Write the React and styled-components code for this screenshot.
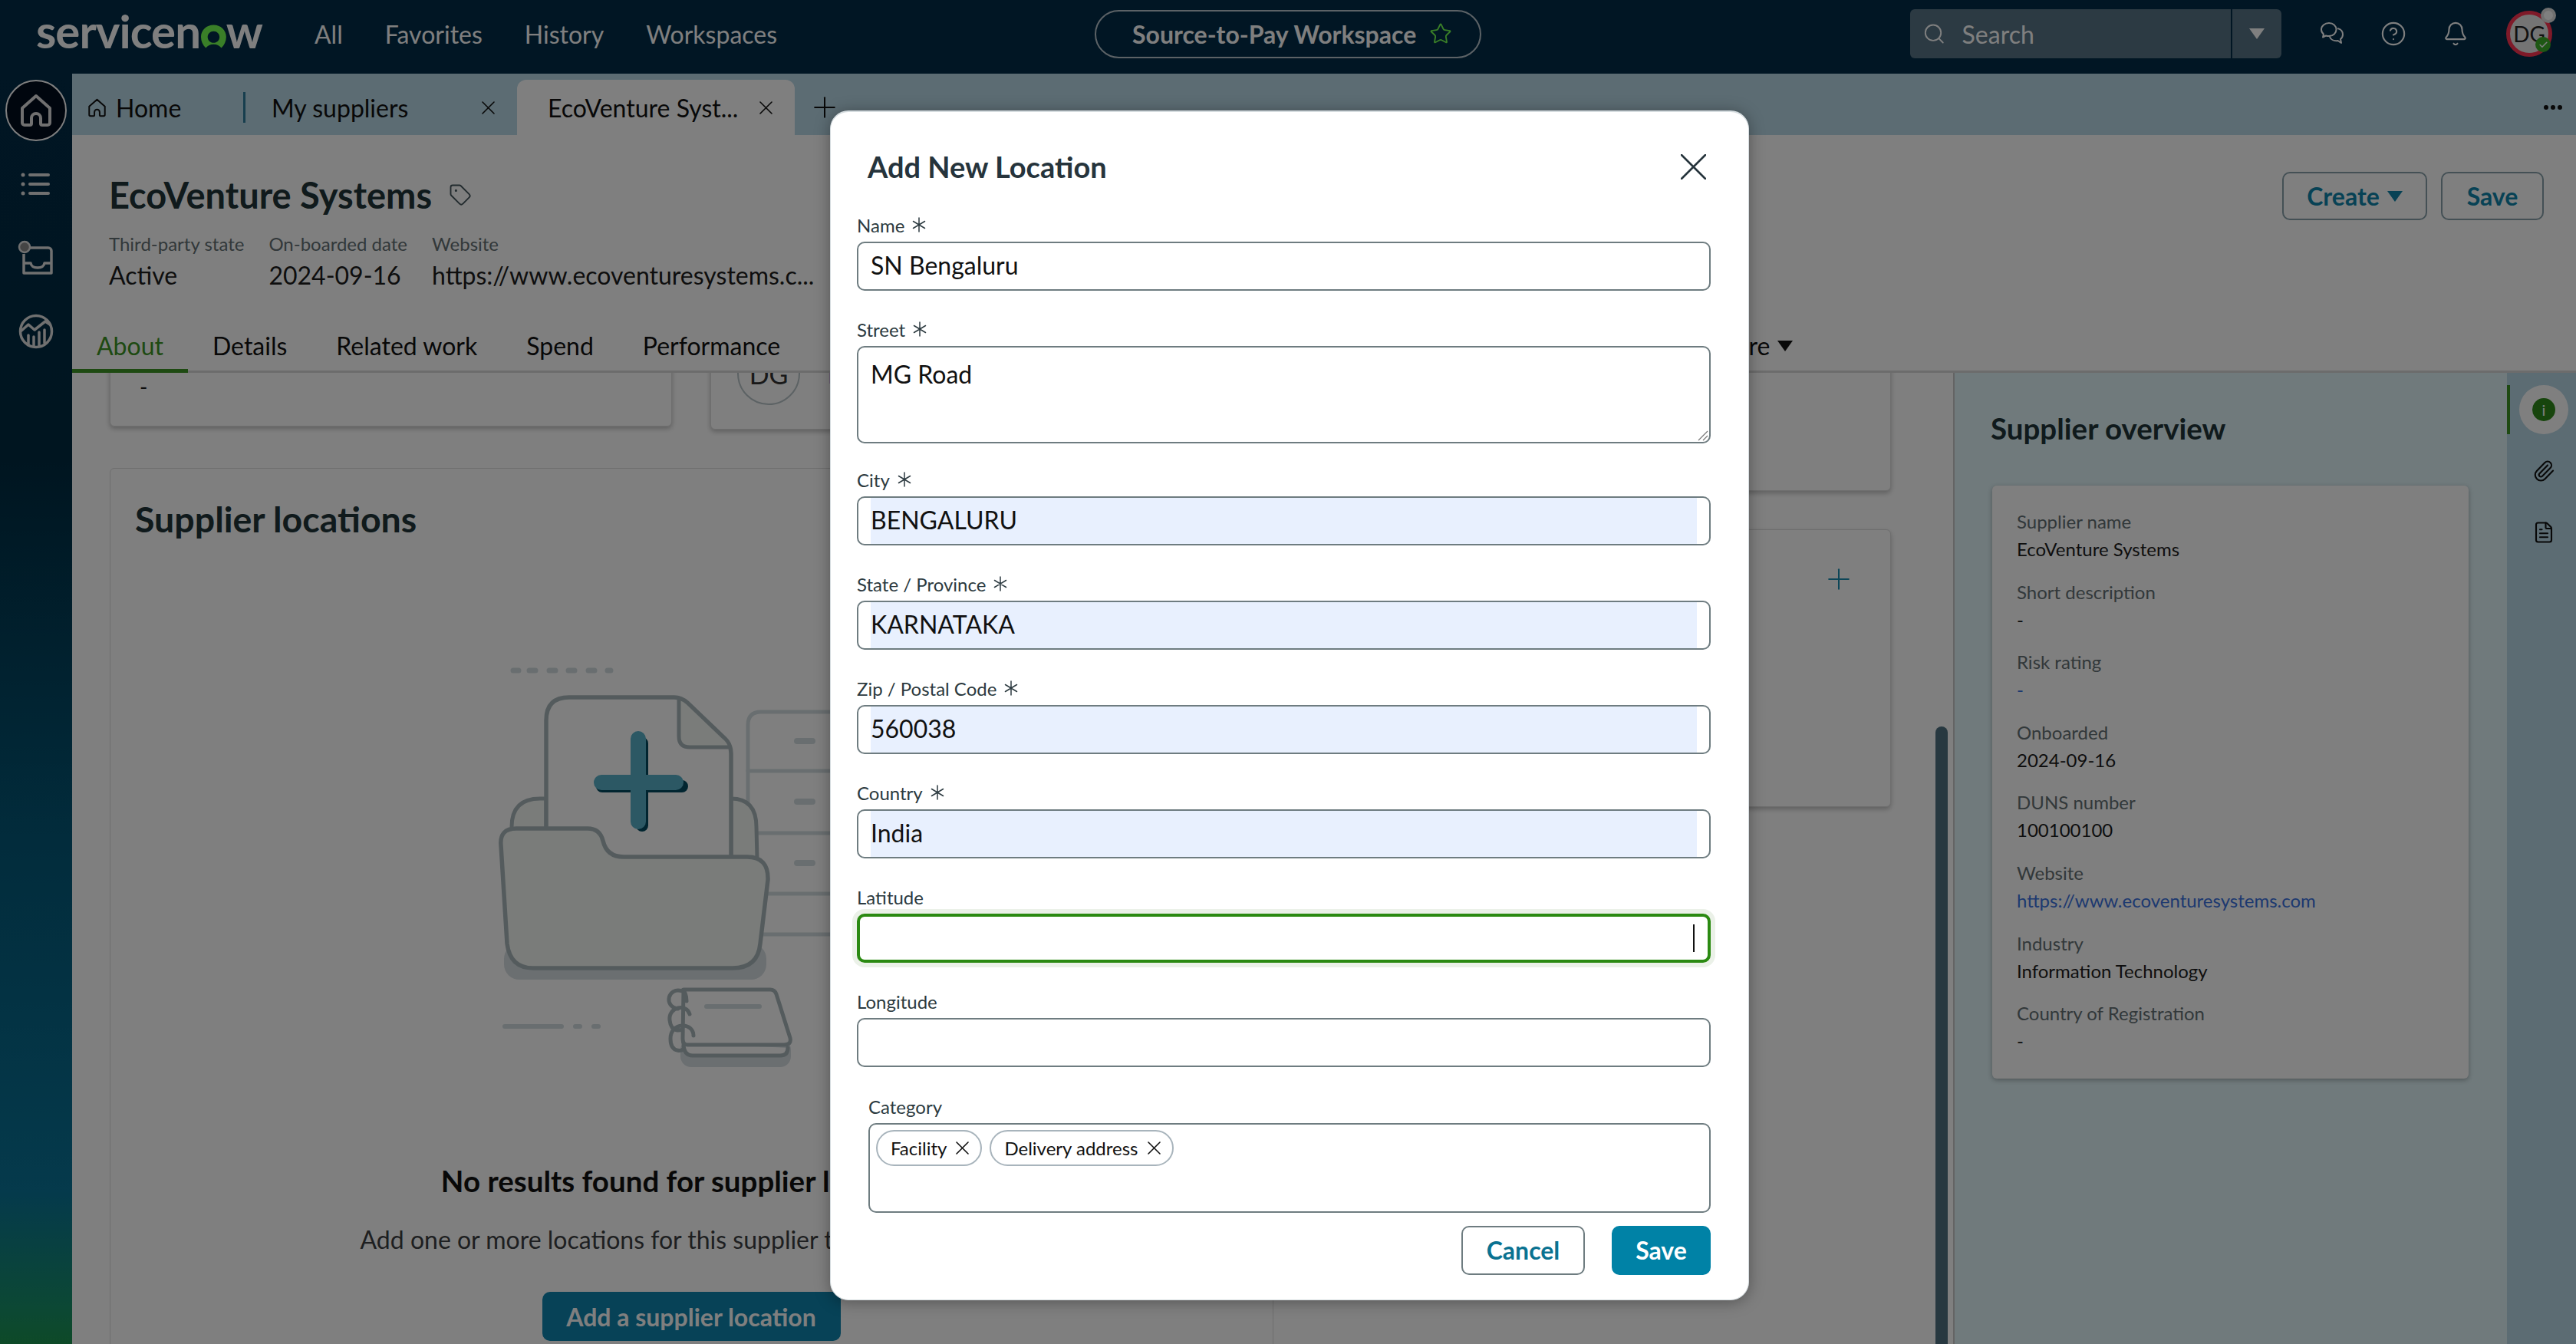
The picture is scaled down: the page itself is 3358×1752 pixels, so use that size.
import React from 'react'
import styled, { createGlobalStyle } from 'styled-components'
import { Search, CircleHelp, Bell, Star, Plus, Tag, Paperclip, FileText, Check } from 'lucide-react'

const GlobalStyle = createGlobalStyle`
  html, body { margin: 0; padding: 0; height: 100%; overflow: hidden; }
  body { font-family: Lato, "Open Sans", sans-serif; background: #fff; color: #1c1c1c; }
  #root { height: 100%; }
  * { box-sizing: border-box; }
`

const Page = styled.div`
  width: 3358px;
  height: 1752px;
  position: relative;
  overflow: hidden;
  display: flex;
  flex-direction: column;
`
const TopBar = styled.header`
  height: 96px;
  flex: none;
  background: #022c48;
  display: flex;
  align-items: center;
  padding: 0 0 8px 47px;
  color: #fff;
`
const Logo = styled.div`
  width: 295px;
  flex: none;
  display: flex;
  align-items: baseline;
  font-size: 60px;
  font-weight: 700;
  letter-spacing: -1px;
  line-height: 60px;
  margin-top: -8px;
  svg { margin: 0 0 -1px 1px; }
`
const Nav = styled.nav`
  display: flex;
  gap: 55px;
  margin-left: 68px;
  font-size: 32px;
`
const Pill = styled.div`
  margin-left: 414px;
  width: 504px;
  height: 63px;
  flex: none;
  border: 2px solid #b8c4cc;
  border-radius: 32px;
  display: flex;
  align-items: center;
  padding-left: 47px;
  gap: 17px;
  font-size: 32px;
  font-weight: 700;
`
const SearchBox = styled.div`
  margin-left: 559px;
  width: 484px;
  height: 64px;
  flex: none;
  background: #587486;
  border-radius: 6px;
  display: flex;
  align-items: center;
  font-size: 32px;
  padding-left: 16px;
  gap: 21px;
`
const SearchLabel = styled.div`
  width: 345px;
`
const SearchCaret = styled.div`
  width: 69px;
  height: 64px;
  border-left: 2px solid #022c48;
  display: flex;
  align-items: center;
  justify-content: center;
`
const TopIcons = styled.div`
  display: flex;
  align-items: center;
  margin-left: 50px;
  gap: 47px;
`
const Avatar = styled.div`
  position: relative;
  width: 60px;
  height: 60px;
  border-radius: 50%;
  border: 5px solid #ff3552;
  background: #e8e8e8;
  color: #222;
  font-size: 28px;
  display: flex;
  align-items: center;
  justify-content: center;
  margin-left: 2px;
`
const AvatarDot = styled.span`
  position: absolute;
  border-radius: 50%;
  display: flex;
  align-items: center;
  justify-content: center;
  right: ${p => p.$right}px;
  top: ${p => p.$top}px;
  width: ${p => p.$size}px;
  height: ${p => p.$size}px;
  background: ${p => p.$bg};
  border: ${p => p.$border};
`
const Shell = styled.div`
  flex: 1;
  display: flex;
  min-height: 0;
`
const LeftRail = styled.aside`
  width: 94px;
  flex: none;
  background: linear-gradient(180deg, #022c48 0%, #002a40 30%, #045878 60%, #0a7498 88%, #18906a 97%, #1c9450 100%);
  display: flex;
  flex-direction: column;
  color: #e0e0e0;
`
const RailItem = styled.div`
  height: 96px;
  display: flex;
  align-items: center;
  justify-content: center;
`
const HomeCircle = styled.div`
  width: 80px;
  height: 80px;
  border-radius: 50%;
  background: #000c1c;
  border: 2px solid #fff;
  display: flex;
  align-items: center;
  justify-content: center;
`
const Work = styled.div`
  flex: 1;
  min-width: 0;
  display: flex;
  flex-direction: column;
`
const TabsBar = styled.div`
  height: 80px;
  flex: none;
  background: #b8d8e6;
  display: flex;
  align-items: flex-end;
  font-size: 32px;
  color: #111;
`
const WorkTab = styled.div`
  height: ${p => (p.$active ? 72 : 80)}px;
  width: ${p => p.$w}px;
  flex: none;
  padding-left: ${p => p.$pad}px;
  display: flex;
  align-items: center;
  justify-content: space-between;
  padding-right: 29px;
  background: ${p => (p.$active ? '#fff' : 'transparent')};
  border-radius: 12px 12px 0 0;
  padding-top: ${p => (p.$active ? 0 : 8)}px;
  margin-top: auto;
`
const TabLabel = styled.span`
  display: flex;
  align-items: center;
  gap: 12px;
`
const TabDivider = styled.div`
  width: 3px;
  height: 40px;
  background: #2f7c9c;
  margin-bottom: 16px;
`
const TabPlus = styled.div`
  height: 80px;
  margin-left: 17px;
  padding-top: 8px;
  display: flex;
  align-items: center;
`
const TabMore = styled.div`
  margin-left: auto;
  height: 80px;
  padding: 8px 18px 0 0;
  display: flex;
  align-items: center;
  gap: 3px;
`
const Dot = styled.span`
  width: 6px;
  height: 6px;
  border-radius: 50%;
  background: #111;
`
const RecordHeader = styled.div`
  height: 310px;
  flex: none;
  background: #fff;
  position: relative;
  display: flex;
  flex-direction: column;
`
const HeaderTop = styled.div`
  flex: 1;
  display: flex;
  justify-content: space-between;
  padding: 50px 42px 0 48px;
`
const RecordTitle = styled.h1`
  margin: 0;
  font-size: 47px;
  line-height: 56px;
  font-weight: 700;
  color: #203438;
  display: flex;
  align-items: center;
  gap: 22px;
  svg { color: #45565c; }
`
const Meta = styled.div`
  display: flex;
  gap: 32px;
  margin-top: 21px;
`
const MetaItem = styled.div`
  display: flex;
  flex-direction: column;
  gap: 6px;
`
const MetaLabel = styled.div`
  font-size: 24px;
  line-height: 30px;
  color: #647074;
`
const MetaValue = styled.div`
  font-size: 32px;
  line-height: 40px;
  color: #1c1c1c;
  white-space: nowrap;
`
const HeaderActions = styled.div`
  display: flex;
  gap: 18px;
  margin-top: -2px;
`
const OutlineBtn = styled.div`
  height: 63px;
  width: ${p => p.$w}px;
  border: 2px solid #88a0aa;
  border-radius: 10px;
  display: flex;
  align-items: center;
  justify-content: center;
  gap: 10px;
  color: #0f84aa;
  font-size: 32px;
  font-weight: 700;
`
const SubTabs = styled.div`
  height: 68px;
  display: flex;
  border-bottom: 3px solid #d8d8d8;
  font-size: 32px;
`
const SubTab = styled.div`
  padding: 2px 32px 0;
  height: 68px;
  display: flex;
  align-items: center;
  gap: 10px;
  margin-left: ${p => p.$ml || 0}px;
  color: ${p => (p.$active ? '#3c9424' : '#111')};
  border-bottom: 5px solid ${p => (p.$active ? '#3c9424' : 'transparent')};
`
const Body = styled.div`
  flex: 1;
  min-height: 0;
  display: flex;
  background: #fff;
`
const Scroller = styled.div`
  width: 2452px;
  flex: none;
  position: relative;
  overflow: hidden;
  padding-left: 49px;
`
const ScrollGrid = styled.div`
  display: grid;
  grid-template-columns: 1517px 757px;
  column-gap: 48px;
  margin-top: -100px;
`
const Column = styled.div`
  display: flex;
  flex-direction: column;
  gap: ${p => p.$gap}px;
`
const CardRow = styled.div`
  display: flex;
  gap: 50px;
  align-items: flex-start;
`
const Card = styled.div`
  width: ${p => (p.$w ? `${p.$w}px` : 'auto')};
  height: ${p => p.$h}px;
  background: #fff;
  border: 1px solid #dcdcdc;
  border-radius: 6px;
  box-shadow: 0 3px 6px rgba(0, 0, 0, 0.25);
  padding: ${p => p.$pad || '0'};
  position: relative;
`
const Dash = styled.div`
  font-size: 28px;
  line-height: 30px;
`
const SmallAvatarRow = styled.div`
  display: flex;
  gap: 36px;
`
const SmallAvatar = styled.div`
  width: 82px;
  height: 82px;
  border-radius: 50%;
  border: 2px solid #b8c4c8;
  display: flex;
  align-items: center;
  justify-content: center;
  font-size: 34px;
  color: #333;
`
const LinkBit = styled.div`
  color: #3a7ce8;
  font-size: 28px;
  line-height: 34px;
  margin-top: 26px;
`
const CardPlus = styled.div`
  display: flex;
  justify-content: flex-end;
  color: #1a8cb0;
`
const LocationsCard = styled.section`
  background: #fff;
  border: 1px solid #dcdcdc;
  border-radius: 6px;
  padding: 37px 33px 0 32px;
  height: 1300px;
`
const CardTitle = styled.h2`
  margin: 0;
  font-size: 46.500px;
  line-height: 56px;
  font-weight: 700;
  color: #203438;
`
const Empty = styled.div`
  display: flex;
  flex-direction: column;
  align-items: center;
  margin-top: 146px;
`
const EmptyTitle = styled.h3`
  margin: 106px 0 0;
  font-size: 38.500px;
  line-height: 46px;
  font-weight: 700;
  color: #111;
  white-space: nowrap;
`
const EmptyText = styled.p`
  margin: 34px 0 0;
  font-size: 32px;
  line-height: 40px;
  color: #3c3f42;
  white-space: nowrap;
`
const PrimaryBtn = styled.div`
  margin-top: 48px;
  height: 64px;
  width: 389px;
  border-radius: 10px;
  background: #0e84ae;
  color: #fff;
  font-size: 32px;
  font-weight: 700;
  display: flex;
  align-items: center;
  justify-content: center;
`
const ScrollThumb = styled.div`
  position: absolute;
  left: 2429px;
  top: 461px;
  bottom: -10px;
  width: 16px;
  border-radius: 8px;
  background: #4e7080;
`
const SidePanel = styled.aside`
  width: 722px;
  flex: none;
  background: #e0f4f8;
  border-left: 2px solid #c8c8c8;
  padding: 47px 0 0 47px;
`
const PanelTitle = styled.h2`
  margin: 0;
  font-size: 38.500px;
  line-height: 50px;
  font-weight: 700;
  color: #203438;
`
const OverviewCard = styled.div`
  margin: 50px 0 0 2px;
  width: 621px;
  height: 773px;
  background: #fff;
  border-radius: 6px;
  box-shadow: 0 2px 6px rgba(0, 0, 0, 0.3);
  padding: 32px 32px;
  display: flex;
  flex-direction: column;
  gap: 25.600px;
`
const InfoGroup = styled.div`
  display: flex;
  flex-direction: column;
  gap: 6px;
`
const InfoLabel = styled.div`
  font-size: 24px;
  line-height: 30px;
  color: #647074;
`
const InfoValue = styled.div`
  font-size: 24px;
  line-height: 30px;
  color: ${p => (p.$link ? '#3a72e0' : '#1c1c1c')};
  white-space: nowrap;
`
const RightRail = styled.aside`
  flex: 1;
  background: #b8d8e6;
  position: relative;
  padding: 16px 0 0 16px;
  display: flex;
  flex-direction: column;
  gap: 16px;
`
const RailBar = styled.div`
  position: absolute;
  left: 0;
  top: 16px;
  width: 4px;
  height: 64px;
  background: #3c9424;
`
const RailBtn = styled.div`
  width: 64px;
  height: 64px;
  border-radius: 50%;
  background: ${p => (p.$active ? '#fff' : 'transparent')};
  color: #111;
  display: flex;
  align-items: center;
  justify-content: center;
`
const InfoDot = styled.div`
  width: 30px;
  height: 30px;
  border-radius: 50%;
  background: #2f8a1a;
  color: #fff;
  font-size: 20px;
  display: flex;
  align-items: center;
  justify-content: center;
`
const Backdrop = styled.div`
  position: absolute;
  inset: 0;
  background: rgba(0, 0, 0, 0.5);
`
const Modal = styled.div`
  position: absolute;
  left: 1082px;
  top: 144px;
  width: 1198px;
  height: 1551px;
  background: #fff;
  border-radius: 24px;
  box-shadow: 0 2px 20px rgba(0, 0, 0, 0.35);
  border: 2px solid #d5dcdf;
  border-width: 2px 1px 1px;
  padding: 0 49px 0 34px;
`
const ModalHead = styled.div`
  height: 135px;
  display: flex;
  align-items: center;
  justify-content: space-between;
  padding: 7px 6px 0 14px;
`
const ModalTitle = styled.h2`
  margin: 0;
  font-size: 38px;
  font-weight: 700;
  color: #26343c;
`
const ModalClose = styled.div`
  color: #26343c;
  display: flex;
`
const Field = styled.div`
  margin-top: ${p => p.$mt ?? 38}px;
  margin-left: ${p => p.$ml || 0}px;
  position: relative;
`
const FieldLabel = styled.label`
  display: flex;
  align-items: center;
  gap: 9px;
  height: 24px;
  margin-bottom: 10px;
  font-size: 24px;
  color: #2c3a40;
`
const InputBox = styled.div`
  height: 64px;
  border: 2px solid #6e7c80;
  border-radius: 10px;
  padding: 0 16px;
  display: flex;
  align-items: stretch;
  background: #fff;
  font-size: 32px;
  color: #111;
  ${p => p.$focus && `
    border: 4px solid #2b8a12;
    box-shadow: 0 0 0 6px #ebf1e8;
    padding: 0 14px;
  `}
`
const InputValue = styled.div`
  flex: 1;
  display: flex;
  align-items: center;
  padding-bottom: 4px;
  background: ${p => (p.$autofill ? '#e8f0fe' : 'transparent')};
`
const TextCaret = styled.span`
  margin: 4px 3px 0 auto;
  width: 2px;
  height: 36px;
  background: #111;
`
const StreetArea = styled.textarea`
  display: block;
  width: 100%;
  height: 127px;
  border: 2px solid #6e7c80;
  border-radius: 10px;
  padding: 15px 16px;
  font-family: inherit;
  font-size: 32px;
  line-height: 40px;
  color: #111;
  outline: none;
  resize: none;
`
const ResizeGrip = styled.svg`
  position: absolute;
  right: 3px;
  bottom: 3px;
  width: 14px;
  height: 14px;
  color: #777;
`
const TagBox = styled.div`
  height: 117px;
  border: 2px solid #6e7c80;
  border-radius: 10px;
  padding: 7px 8px;
  display: flex;
  align-items: flex-start;
  gap: 10px;
`
const Chip = styled.div`
  height: 47px;
  padding: 0 15px 0 17px;
  border: 2px solid #a8b4bc;
  border-radius: 24px;
  display: flex;
  align-items: center;
  gap: 12px;
  font-size: 24px;
  color: #111;
`
const ModalActions = styled.div`
  display: flex;
  justify-content: flex-end;
  gap: 35px;
  margin-top: 17px;
`
const ModalBtn = styled.div`
  height: 64px;
  width: ${p => p.$w}px;
  padding-bottom: 2px;
  border-radius: 10px;
  display: flex;
  align-items: center;
  justify-content: center;
  font-size: 32px;
  font-weight: 700;
  color: ${p => (p.$primary ? '#fff' : '#0a7291')};
  background: ${p => (p.$primary ? '#0082a6' : '#fff')};
  border: 2px solid ${p => (p.$primary ? '#0082a6' : '#6e7c80')};
`

const Caret = ({ size = 18, color = 'currentColor' }) => (
  <svg width={size} height={size * 0.7} viewBox="0 0 20 14">
    <path d="M0 0h20L10 14z" fill={color} />
  </svg>
)

// thin cross that fills its whole box, the lucide one has wide margins
const Cross = ({ size = 17, width = 1.6 }) => (
  <svg width={size} height={size} viewBox={`0 0 ${size} ${size}`} fill="none" stroke="currentColor" strokeWidth={width} strokeLinecap="round">
    <path d={`M1 1 ${size - 1} ${size - 1}M${size - 1} 1 1 ${size - 1}`} />
  </svg>
)

const Required = () => (
  <svg width="20" height="20" viewBox="0 0 20 20" fill="none" stroke="#2c3a40" strokeWidth="1.500" strokeLinecap="round">
    <path d="M10 1v18M2.500 5.500l15 9M17.500 5.500l-15 9" />
  </svg>
)

const LogoRing = () => (
  <svg width="34" height="31" viewBox="0 0 34 31">
    <path
      fill="#74ff50"
      fillRule="evenodd"
      d="M17 0C7.600 0 0 7 0 16c0 6 2.400 11 6.500 15 2.500-3.500 6-5 10.500-5s8 1.500 10.500 5c4-4 6.500-9 6.500-15C34 7 26.400 0 17 0zm0 8.500c4.500 0 8 3.300 8 7.800s-3.500 7.800-8 7.800-8-3.300-8-7.800 3.500-7.800 8-7.800z"
    />
  </svg>
)

const HomeIcon = ({ size = 44, width = 4 }) => (
  <svg width={size} height={size} viewBox="0 0 44 44" fill="none" stroke="currentColor" strokeWidth={width} strokeLinejoin="round">
    <path d="M4 19 22 3l18 16v19a3 3 0 0 1-3 3H30a2 2 0 0 1-2-2v-7a6 6 0 0 0-12 0v7a2 2 0 0 1-2 2H7a3 3 0 0 1-3-3z" />
  </svg>
)

const ListIcon = () => (
  <svg width="40" height="30" viewBox="0 0 40 30" fill="currentColor">
    <circle cx="3" cy="3" r="2.500" />
    <circle cx="3" cy="15" r="2.500" />
    <circle cx="3" cy="27" r="2.500" />
    <rect x="10" y="1" width="28" height="4" rx="2" />
    <rect x="10" y="13" width="28" height="4" rx="2" />
    <rect x="10" y="25" width="28" height="4" rx="2" />
  </svg>
)

const InboxIcon = () => (
  <svg width="48" height="46" viewBox="0 0 48 46" fill="none" stroke="currentColor" strokeWidth="3.500" strokeLinejoin="round">
    <path d="M14 10h26a4 4 0 0 1 4 4v29H8V18" />
    <path d="M8 30h9c1 5 4 6 9 6s8-1 9-6h9" />
    <circle cx="9" cy="9" r="7" fill="#8a8a8a" strokeWidth="2.500" />
  </svg>
)

const ChartIcon = () => (
  <svg width="46" height="46" viewBox="0 0 46 46" fill="none" stroke="currentColor" strokeWidth="3.500" strokeLinecap="round" strokeLinejoin="round">
    <circle cx="23" cy="23" r="20.500" />
    <path d="M4 22 13 14l8 7 14-11 6 4" />
    <path d="M13 28v13M20 30v12M27 24v18M34 21v17" />
  </svg>
)

const ChatIcon = () => (
  <svg width="32" height="32" viewBox="0 0 32 32" fill="none" stroke="currentColor" strokeWidth="2" strokeLinejoin="round">
    <path d="M12 2C6.500 2 2 6 2 10.500c0 2.500 1 4.500 3 6l-1 4 4-2c1.200.4 2.500.6 4 .6 5.500 0 9.500-3.800 9.500-8.600S17.500 2 12 2z" />
    <path d="M23 9c4 1 7 4 7 8 0 2.500-1 4.500-3 6l1 5-4.500-3c-5 .8-9.500-1.500-11-6" />
  </svg>
)

// folder + document picture of the empty state, viewBox is in page pixels
const EmptyArt = () => {
  const soft = '#d2dde0'
  const line = '#a9b7bb'
  const fill = '#f4f8f4'
  return (
    <svg width="600" height="560" viewBox="602 850 600 560" fill="none" strokeLinecap="round" strokeLinejoin="round">
      <path d="M670 874h7M691 874h8M717 874h8M742 874h8M768 874h8M793 874h4" stroke={soft} strokeWidth="7" />
      {/* drawers */}
      <path d="M976 1046V945q0-17 17-17H1200" stroke={soft} strokeWidth="5" />
      <path d="M976 1005H1200M985 1086H1200M1000 1165H1200M996 1218H1200" stroke={soft} strokeWidth="5" />
      <path d="M1040 966h20M1040 1045h20M1040 1125h20" stroke={soft} strokeWidth="8" />
      {/* back flap */}
      <path d="M668 1085V1078q0-37 37-37H713V1085zM954 1041q33 0 33 37L988 1120H954z" fill={fill} stroke={line} strokeWidth="5" />
      {/* document */}
      <path d="M713 1084V939q0-30 30-30H880q9 0 17 7L943 960q11 10 11 22V1118" fill="#fff" stroke={line} strokeWidth="5.500" />
      <path d="M886 910V960q0 14 14 14H953q-2-8-10-14L897 916q-5-4-11-6z" fill={fill} stroke={line} strokeWidth="5" />
      {/* plus */}
      <path d="M786 1025H890M838 969V1076" stroke="#024a60" strokeWidth="16" />
      <path d="M785 1020H882M833 963V1071" stroke="#58b0c8" strokeWidth="20" />
      {/* folder */}
      <rect x="658" y="1230" width="342" height="47" rx="20" fill="#d6dee2" />
      <path d="M654 1102q-2-22 20-22H767q16 0 20 16q5 21 27 21H975q28 0 27 30L992 1230q-3 32-36 32H696q-30 0-34-32z" fill={fill} stroke={line} strokeWidth="5.500" />
      {/* notebook */}
      <rect x="888" y="1355" width="144" height="36" rx="14" fill="#d6dee2" />
      <path d="M892 1360q0 16 12 16H1018q10 0 10-10" fill="#fff" stroke={line} strokeWidth="5" />
      <path d="M892 1290H1005q6 0 8 6L1031 1353q2 9-8 9H897q-6 0-6-8z" fill="#fff" stroke={line} strokeWidth="5" />
      <path d="M890 1292c-18-6-25 20-5 23M900 1322c-4-14-28-10-26 8s16 12 16 12M905 1350c0-18-30-18-30 4s20 14 16 14M896 1305c0-8-3-15-6-14" stroke={line} strokeWidth="5" />
      <path d="M922 1312H991" stroke={soft} strokeWidth="6" />
      <path d="M659 1338H733M751 1338h6M775 1338h6" stroke={soft} strokeWidth="6" />
    </svg>
  )
}

const overview = [
  ['Supplier name', 'EcoVenture Systems'],
  ['Short description', '-'],
  ['Risk rating', '-', true],
  ['Onboarded', '2024-09-16'],
  ['DUNS number', '100100100'],
  ['Website', 'https://www.ecoventuresystems.com', true],
  ['Industry', 'Information Technology'],
  ['Country of Registration', '-'],
]

const addressFields = [
  ['City', 'BENGALURU', 35],
  ['State / Province', 'KARNATAKA', 38],
  ['Zip / Postal Code', '560038', 38],
  ['Country', 'India', 38],
]

export default function App() {
  return (
    <Page>
      <GlobalStyle />
      <TopBar>
        <Logo>
          servicen
          <LogoRing />
          w
        </Logo>
        <Nav>
          <span>All</span>
          <span>Favorites</span>
          <span>History</span>
          <span>Workspaces</span>
        </Nav>
        <Pill>
          Source-to-Pay Workspace
          <Star size={30} strokeWidth={1.5} color="#74ff50" />
        </Pill>
        <SearchBox>
          <Search size={32} strokeWidth={1.5} />
          <SearchLabel>Search</SearchLabel>
          <SearchCaret>
            <Caret size={20} />
          </SearchCaret>
        </SearchBox>
        <TopIcons>
          <ChatIcon />
          <CircleHelp size={34} strokeWidth={1.5} />
          <Bell size={34} strokeWidth={1.5} />
          <Avatar>
            DG
            <AvatarDot $right={-10} $top={-9} $size={20} $bg="#fff" $border="4px solid #e0e0e0" />
            <AvatarDot $right={-3} $top={29} $size={20} $bg="#3cae28">
              <Check size={13} strokeWidth={3} color="#fff" />
            </AvatarDot>
          </Avatar>
        </TopIcons>
      </TopBar>
      <Shell>
        <LeftRail>
          <RailItem>
            <HomeCircle>
              <HomeIcon />
            </HomeCircle>
          </RailItem>
          <RailItem>
            <ListIcon />
          </RailItem>
          <RailItem>
            <InboxIcon />
          </RailItem>
          <RailItem>
            <ChartIcon />
          </RailItem>
        </LeftRail>
        <Work>
          <TabsBar>
            <WorkTab $w={223} $pad={20}>
              <TabLabel>
                <HomeIcon size={25} width={3.5} />
                Home
              </TabLabel>
            </WorkTab>
            <TabDivider />
            <WorkTab $w={354} $pad={34}>
              My suppliers
              <Cross />
            </WorkTab>
            <WorkTab $active $w={362} $pad={40}>
              EcoVenture Syst...
              <Cross />
            </WorkTab>
            <TabPlus>
              <Plus size={44} strokeWidth={1.1} />
            </TabPlus>
            <TabMore>
              <Dot />
              <Dot />
              <Dot />
            </TabMore>
          </TabsBar>
          <RecordHeader>
            <HeaderTop>
              <div>
                <RecordTitle>
                  EcoVenture Systems
                  <Tag size={30} strokeWidth={1.5} />
                </RecordTitle>
                <Meta>
                  <MetaItem>
                    <MetaLabel>Third-party state</MetaLabel>
                    <MetaValue>Active</MetaValue>
                  </MetaItem>
                  <MetaItem>
                    <MetaLabel>On-boarded date</MetaLabel>
                    <MetaValue>2024-09-16</MetaValue>
                  </MetaItem>
                  <MetaItem>
                    <MetaLabel>Website</MetaLabel>
                    <MetaValue>https://www.ecoventuresystems.c...</MetaValue>
                  </MetaItem>
                </Meta>
              </div>
              <HeaderActions>
                <OutlineBtn $w={189}>
                  Create
                  <Caret size={20} />
                </OutlineBtn>
                <OutlineBtn $w={134}>Save</OutlineBtn>
              </HeaderActions>
            </HeaderTop>
            <SubTabs>
              <SubTab $active>About</SubTab>
              <SubTab>Details</SubTab>
              <SubTab>Related work</SubTab>
              <SubTab>Spend</SubTab>
              <SubTab>Performance</SubTab>
              <SubTab $ml={1151}>
                More
                <Caret size={20} />
              </SubTab>
            </SubTabs>
          </RecordHeader>
          <Body>
            <Scroller>
              <ScrollGrid>
                <Column $gap={50}>
                  <CardRow>
                    <Card $w={733} $h={170} $pad="102px 0 0 38px">
                      <Dash>-</Dash>
                    </Card>
                    <Card $w={734} $h={174} $pad="59px 0 0 34px">
                      <SmallAvatarRow>
                        <SmallAvatar>DG</SmallAvatar>
                        <LinkBit>DG</LinkBit>
                      </SmallAvatarRow>
                    </Card>
                  </CardRow>
                  <LocationsCard>
                    <CardTitle>Supplier locations</CardTitle>
                    <Empty>
                      <EmptyArt />
                      <EmptyTitle>No results found for supplier locations</EmptyTitle>
                      <EmptyText>Add one or more locations for this supplier to list their details.</EmptyText>
                      <PrimaryBtn>Add a supplier location</PrimaryBtn>
                    </Empty>
                  </LocationsCard>
                </Column>
                <Column $gap={50}>
                  <Card $h={254} />
                  <Card $h={362} $pad="42px 45px 0 0">
                    <CardPlus>
                      <Plus size={44} strokeWidth={1.1} />
                    </CardPlus>
                  </Card>
                </Column>
              </ScrollGrid>
              <ScrollThumb />
            </Scroller>
            <SidePanel>
              <PanelTitle>Supplier overview</PanelTitle>
              <OverviewCard>
                {overview.map(([label, value, link]) => (
                  <InfoGroup key={label}>
                    <InfoLabel>{label}</InfoLabel>
                    <InfoValue $link={link}>{value}</InfoValue>
                  </InfoGroup>
                ))}
              </OverviewCard>
            </SidePanel>
            <RightRail>
              <RailBar />
              <RailBtn $active>
                <InfoDot>i</InfoDot>
              </RailBtn>
              <RailBtn>
                <Paperclip size={30} strokeWidth={1.7} />
              </RailBtn>
              <RailBtn>
                <FileText size={30} strokeWidth={1.7} />
              </RailBtn>
            </RightRail>
          </Body>
        </Work>
      </Shell>
      <Backdrop />
      <Modal>
        <ModalHead>
          <ModalTitle>Add New Location</ModalTitle>
          <ModalClose>
            <Cross size={33} width={2.6} />
          </ModalClose>
        </ModalHead>
        <Field $mt={0}>
          <FieldLabel>
            Name <Required />
          </FieldLabel>
          <InputBox>
            <InputValue>SN Bengaluru</InputValue>
          </InputBox>
        </Field>
        <Field>
          <FieldLabel>
            Street <Required />
          </FieldLabel>
          <StreetArea readOnly defaultValue="MG Road" />
          <ResizeGrip viewBox="0 0 14 14" fill="none" stroke="currentColor" strokeWidth="1.200">
            <path d="M1 13 13 1M7 13l6-6" />
          </ResizeGrip>
        </Field>
        {addressFields.map(([label, value, mt]) => (
          <Field key={label} $mt={mt}>
            <FieldLabel>
              {label} <Required />
            </FieldLabel>
            <InputBox>
              <InputValue $autofill>{value}</InputValue>
            </InputBox>
          </Field>
        ))}
        <Field>
          <FieldLabel>Latitude</FieldLabel>
          <InputBox $focus>
            <InputValue>
              <TextCaret />
            </InputValue>
          </InputBox>
        </Field>
        <Field>
          <FieldLabel>Longitude</FieldLabel>
          <InputBox>
            <InputValue />
          </InputBox>
        </Field>
        <Field $mt={39} $ml={15}>
          <FieldLabel>Category</FieldLabel>
          <TagBox>
            <Chip>
              Facility
              <Cross />
            </Chip>
            <Chip>
              Delivery address
              <Cross />
            </Chip>
          </TagBox>
        </Field>
        <ModalActions>
          <ModalBtn $w={161}>Cancel</ModalBtn>
          <ModalBtn $primary $w={129}>Save</ModalBtn>
        </ModalActions>
      </Modal>
    </Page>
  )
}
